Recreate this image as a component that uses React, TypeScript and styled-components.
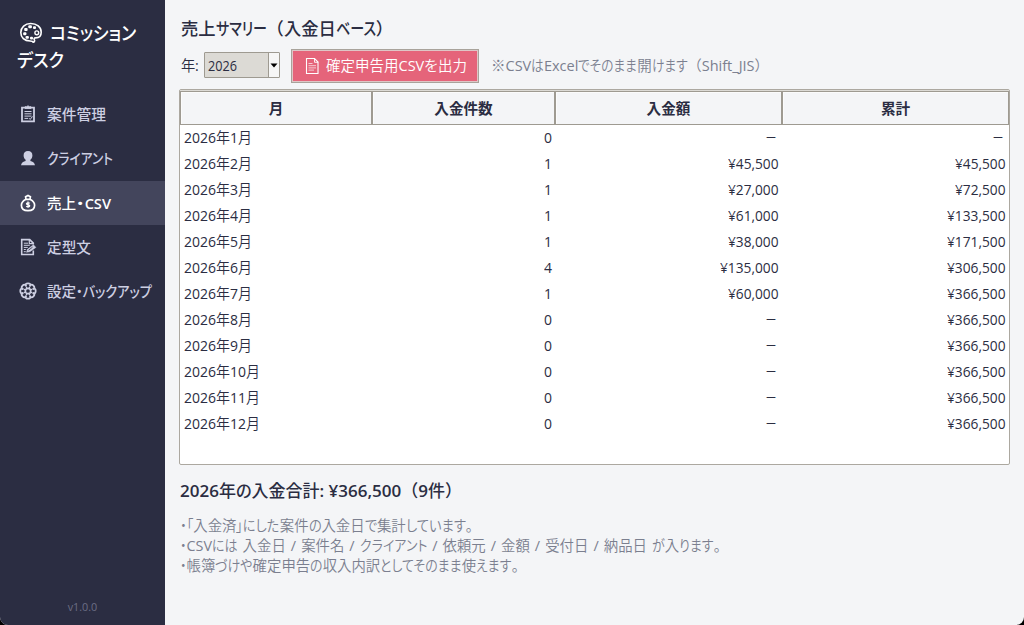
import React, { useLayoutEffect, useRef, useState } from 'react';
import styled, { createGlobalStyle, css } from 'styled-components';

const GlobalStyle = createGlobalStyle`
  * { box-sizing: border-box; }
  html, body { margin: 0; background: #000; overflow: hidden; }
  body {
    font-family: "Open Sans", "Noto Sans CJK JP", sans-serif;
    font-size: 14.5px;
    font-weight: 360;
    color: #2b2d42;
  }
`;

const KANA = /([ぁ-んァ-ヶー・「」]+)/;
const LATIN = /([\u0020-\u00ff]+)/;

const Line = styled.span`
  display: inline-flex;
  align-items: baseline;
  white-space: pre;
`;

const Run = styled.span<{ $kana: boolean; $latinWeight?: number }>`
  display: inline-block;
  flex: none;
  transform-origin: 0 50%;
  ${p => p.$kana && css`font-feature-settings: 'palt';`}
  ${p => p.$latinWeight && css`font-weight: ${p.$latinWeight};`}
`;

function Fit({ w, latin = 400, children }: { w: number; latin?: number; children: string }) {
  const ref = useRef<HTMLSpanElement>(null);
  const [sizes, setSizes] = useState<number[] | null>(null);
  const runs = children
    .split(KANA)
    .flatMap(s => (KANA.test(s) ? [s] : s.split(LATIN)))
    .filter(Boolean);
  const hasKana = runs.some(r => KANA.test(r));

  useLayoutEffect(() => {
    if (ref.current) {
      setSizes(Array.from(ref.current.children).map(c => c.getBoundingClientRect().width));
    }
  }, []);

  const elastic = (r: string) => !hasKana || KANA.test(r);
  let k = 1;
  if (sizes) {
    let fixed = 0;
    let flexible = 0;
    runs.forEach((r, i) => (elastic(r) ? (flexible += sizes[i]) : (fixed += sizes[i])));
    k = (w - fixed) / flexible;
  }

  return (
    <Line ref={ref}>
      {runs.map((r, i) => (
        <Run
          key={i}
          $kana={KANA.test(r)}
          $latinWeight={LATIN.test(r) ? latin : undefined}
          style={
            sizes && elastic(r)
              ? { transform: `scaleX(${k})`, marginRight: sizes[i] * (k - 1) }
              : undefined
          }
        >
          {r}
        </Run>
      ))}
    </Line>
  );
}

/* ------------------------------- layout ------------------------------- */

const Window = styled.div`
  display: flex;
  width: 1024px;
  height: 625px;
  background: #f4f5f7;
  border-radius: 0 0 8px 8px;
  overflow: hidden;
`;

const Sidebar = styled.aside`
  display: flex;
  flex-direction: column;
  width: 165px;
  flex: none;
  background: #2b2d42;
`;

const Brand = styled.h1`
  margin: 0;
  height: 92px;
  padding: 19px 0 0 17px;
  color: #fff;
  font-size: 18.7px;
  font-weight: 500;
  line-height: 27px;
`;

const BrandRow = styled.div`
  display: flex;
  align-items: center;
  height: 27px;
  svg { margin: 1px 7px 0 2px; }
`;

const NavItem = styled.a<{ $active?: boolean }>`
  display: flex;
  align-items: center;
  height: 44.25px;
  padding: 0 0 0 19px;
  gap: 10px;
  font-size: 14.6px;
  font-weight: 500;
  line-height: 20px;
  color: ${p => (p.$active ? '#fff' : '#cdcfe2')};
  background: ${p => (p.$active ? '#43455c' : 'transparent')};
  svg { flex: none; }
`;

const Version = styled.div`
  margin-top: auto;
  height: 27px;
  text-align: center;
  font-size: 10.8px;
  font-weight: 400;
  line-height: 18px;
  color: #6b6d85;
`;

const Main = styled.main`
  display: flex;
  flex-direction: column;
  flex: 1;
  padding: 16px 14px 0 14px;
`;

const Title = styled.h2`
  margin: 0;
  padding-left: 2px;
  font-size: 17.3px;
  font-weight: 500;
  line-height: 26px;
  height: 32px;
`;

const Toolbar = styled.div`
  display: flex;
  align-items: center;
  height: 35px;
  padding-left: 2px;
  line-height: 20px;
`;

const Select = styled.div`
  display: flex;
  width: 76px;
  height: 26px;
  margin: 0 11px 1px 5px;
  border: 1px solid #9e9a91;
  border-radius: 1px;
  background: #dcdad5;
`;

const SelectValue = styled.span`
  flex: 1;
  padding-left: 3px;
  line-height: 25px;
  font-size: 13.6px;
`;

const SelectArrow = styled.span`
  display: flex;
  align-items: center;
  justify-content: center;
  width: 11px;
  background: #f6f6f6;
  border-left: 1px solid #9e9a91;
`;

const ExportButton = styled.button`
  display: flex;
  align-items: center;
  width: 188px;
  height: 34px;
  padding: 0 0 0 12px;
  gap: 5px;
  border: 1px solid #a8a39b;
  box-shadow: inset 0 0 0 1px #dfc6c6;
  background: #e5647a;
  color: #fff;
  font: inherit;
  line-height: 20px;
`;

const Hint = styled.span`
  margin-left: 12px;
  color: #7b7f8f;
`;

const Table = styled.div`
  height: 376px;
  margin-top: 6px;
  border: 1px solid #aca8a0;
  border-radius: 2px;
  background: #fff;
`;

const columns = css`
  display: grid;
  grid-template-columns: 192px 183px 227px 1fr;
`;

const HeadRow = styled.div`
  ${columns}
  height: 35px;
  padding-top: 1px;
  background: #dcdad5;
`;

const HeadCell = styled.div`
  display: flex;
  align-items: center;
  justify-content: center;
  border: 1px solid #9e9a91;
  box-shadow: inset 1px 1px 0 #fbfbfb;
  background: #f4f5f7;
  font-weight: 700;
  font-size: 14.6px;
  line-height: 20px;
`;

const BodyRow = styled.div`
  ${columns}
  height: 26px;
  line-height: 26px;
`;

const Cell = styled.div<{ $num?: boolean }>`
  padding: 0 4px;
  text-align: ${p => (p.$num ? 'right' : 'left')};
  &:nth-child(2) { padding-right: 3px; }
`;

const Dash = styled.span`
  margin-right: 1px;
`;

const Total = styled.div`
  margin-top: 13px;
  padding-left: 1px;
  font-size: 17px;
  font-weight: 500;
  line-height: 26px;
`;

const Notes = styled.div`
  display: flex;
  flex-direction: column;
  margin-top: 12px;
  padding-left: 1px;
  font-size: 14.4px;
  line-height: 20px;
  color: #7b7f8f;
`;

const NoteRow = styled.div<{ $space?: number }>`
  height: 20px;
  word-spacing: ${p => p.$space ?? 0}px;
`;

/* -------------------------------- icons -------------------------------- */

const PaletteIcon = () => (
  <svg width="24" height="22" viewBox="0 0 24 22" fill="none">
    <path d="M14.2 20.2c-.3-1.2-1.4-1.2-3.1-1.2C5.4 19 1.8 15.500 1.800 10.500 1.800 5.500 6 1.500 11.700 1.500c6 0 10.500 3.700 10.500 8.700 0 4.300-2 5.700-5.600 5.700-1.700 0-1.800 1-1.200 2 .5 1 0 2.200-1.200 2.300Z" stroke="#fff" strokeWidth="1.600" />
    <g fill="#fff">
      <rect x="9.300" y="3.300" width="3.600" height="3" rx="1" />
      <rect x="14" y="4.300" width="3" height="2.800" rx="1" />
      <rect x="5.200" y="6" width="3.400" height="3" rx="1" />
      <rect x="4.200" y="10.300" width="3.200" height="3" rx="1" />
      <rect x="6.500" y="14" width="3.400" height="2.800" rx="1" />
      <rect x="11" y="14.800" width="3" height="2.600" rx="1" />
    </g>
    <circle cx="17.800" cy="10.800" r="1.900" stroke="#fff" strokeWidth="1.400" />
  </svg>
);

const ClipboardIcon = () => (
  <svg width="18" height="18" viewBox="0 0 18 18" fill="none" stroke="currentColor">
    <path d="M3 2.700h12v13.600H3z" strokeWidth="1.800" />
    <path d="M6 3.500V1.700h1.700L9 .7l1.300 1H12v1.800z" fill="currentColor" strokeWidth=".8" />
    <path d="M5.500 6.500h7M5.500 8.800h7M5.500 11.100h7M5.500 13.400h3.500M10 13.200l1.200 1.200 2.300-2.900" strokeWidth="1" />
  </svg>
);

const PersonIcon = () => (
  <svg width="18" height="18" viewBox="0 0 18 18" fill="currentColor">
    <path d="M9 2c2.900 0 4.400 1.800 4.400 4.400 0 1.800-.8 3.500-2 4.400v1.100c2.200.8 4.100 1.400 4.600 4.300H2c.5-2.900 2.400-3.500 4.600-4.300v-1.100c-1.200-.9-2-2.600-2-4.400C4.600 3.800 6.100 2 9 2Z" />
  </svg>
);

const MoneyBagIcon = () => (
  <svg width="18" height="18" viewBox="0 0 18 18" fill="none" stroke="currentColor">
    <path d="M6.600 5.400h4.800c2.600 1.400 4.200 3.300 4.200 5.800 0 3.500-2.700 5.500-6.600 5.500s-6.600-2-6.600-5.500c0-2.500 1.600-4.400 4.200-5.800Z" strokeWidth="1.700" />
    <path d="M7 5 6.600 2.800 9 1.400l2.400 1.400L11 5" strokeWidth="1.700" />
    <path d="M10.800 9.300c-.7-.6-3.300-.8-3.300.5 0 1.300 3.200.6 3.200 2 0 1.300-2.600 1.100-3.500.5M9 7.600v6.200" strokeWidth="1.300" />
  </svg>
);

const MemoIcon = () => (
  <svg width="18" height="18" viewBox="0 0 18 18" fill="none" stroke="currentColor">
    <path d="M14.300 12.500v4H2.700V1.600h8l3.600 3.600v1.300" strokeWidth="1.600" />
    <path d="M10.300 1.700v4h4" strokeWidth="1.200" />
    <path d="M4.800 5.200H9M4.800 7.300h6M4.800 9.400h4M4.800 11.500h2M4.800 13.700h2" strokeWidth="1" />
    <path d="m7.500 14.300 1-3.100 6-4.400 2.400 2.600-6 4.300z" fill="currentColor" strokeWidth=".5" />
    <path d="m9.500 12.200 4-3" stroke="#2b2d42" strokeWidth=".8" />
  </svg>
);

const PETALS = Array.from({ length: 8 }, (_, i) => i * 45);

const GearIcon = () => (
  <svg width="18" height="18" viewBox="0 0 18 18" fill="none" stroke="currentColor">
    {PETALS.map(a => (
      <g key={a} transform={`rotate(${a} 9 9)`}>
        <path d="M6.900 4.200C6 2.100 7.300 1.300 9 1.300s3 .8 2.100 2.900" strokeWidth="1.800" />
        <path d="M9 4.200v2.200" strokeWidth="1.200" transform="rotate(22.5 9 9)" />
      </g>
    ))}
    <circle cx="9" cy="9" r="2.700" strokeWidth="1.700" />
  </svg>
);

const PageIcon = () => (
  <svg width="17" height="18" viewBox="0 0 17 18" fill="none" stroke="#fff" strokeWidth="1.100">
    <path d="M2.500 1.500h8l3.500 3.500v11.500H2.500z" />
    <path d="M10.500 1.500v3.800h3.700" strokeWidth=".9" />
    <path d="M4.500 6.500h4M4.500 8.700h7.500M4.500 10.900h7.500M4.500 13.100h5.500" strokeWidth=".8" opacity=".85" />
  </svg>
);

/* --------------------------------- data --------------------------------- */

const nav = [
  { label: '案件管理', w: 59, Icon: ClipboardIcon },
  { label: 'クライアント', w: 66, Icon: PersonIcon },
  { label: '売上・CSV', w: 64, Icon: MoneyBagIcon, active: true },
  { label: '定型文', w: 44, Icon: MemoIcon },
  { label: '設定・バックアップ', w: 105, Icon: GearIcon },
];

const rows: [string, string, string, string][] = [
  ['1', '0', '－', '－'],
  ['2', '1', '¥45,500', '¥45,500'],
  ['3', '1', '¥27,000', '¥72,500'],
  ['4', '1', '¥61,000', '¥133,500'],
  ['5', '1', '¥38,000', '¥171,500'],
  ['6', '4', '¥135,000', '¥306,500'],
  ['7', '1', '¥60,000', '¥366,500'],
  ['8', '0', '－', '¥366,500'],
  ['9', '0', '－', '¥366,500'],
  ['10', '0', '－', '¥366,500'],
  ['11', '0', '－', '¥366,500'],
  ['12', '0', '－', '¥366,500'],
];

const Amount = ({ value }: { value: string }) =>
  value === '－' ? (
    <Dash><Fit w={12}>－</Fit></Dash>
  ) : (
    <Fit w={value.length === 8 ? 58.5 : 50.5}>{value}</Fit>
  );

export default function App() {
  return (
    <>
      <GlobalStyle />
      <Window>
        <Sidebar>
          <Brand>
            <BrandRow><PaletteIcon /><Fit w={86}>コミッション</Fit></BrandRow>
            <BrandRow><Fit w={47}>デスク</Fit></BrandRow>
          </Brand>
          {nav.map(({ label, w, Icon, active }) => (
            <NavItem key={label} $active={active}><Icon /><Fit w={w} latin={600}>{label}</Fit></NavItem>
          ))}
          <Version>v1.0.0</Version>
        </Sidebar>
        <Main>
          <Title><Fit w={212}>売上サマリー（入金日ベース）</Fit></Title>
          <Toolbar>
            <Fit w={18}>年:</Fit>
            <Select>
              <SelectValue><Fit w={29}>2026</Fit></SelectValue>
              <SelectArrow>
                <svg width="8" height="5" viewBox="0 0 8 5"><path d="M.5.5h7L4 4.500z" fill="#000" /></svg>
              </SelectArrow>
            </Select>
            <ExportButton><PageIcon /><Fit w={141}>確定申告用CSVを出力</Fit></ExportButton>
            <Hint><Fit w={278}>※CSVはExcelでそのまま開けます（Shift_JIS）</Fit></Hint>
          </Toolbar>
          <Table>
            <HeadRow>
              <HeadCell>月</HeadCell>
              <HeadCell>入金件数</HeadCell>
              <HeadCell>入金額</HeadCell>
              <HeadCell>累計</HeadCell>
            </HeadRow>
            {rows.map(([month, count, amount, sum]) => (
              <BodyRow key={month}>
                <Cell><Fit w={month.length === 2 ? 76 : 68}>{`2026年${month}月`}</Fit></Cell>
                <Cell $num><Fit w={8}>{count}</Fit></Cell>
                <Cell $num><Amount value={amount} /></Cell>
                <Cell $num><Amount value={sum} /></Cell>
              </BodyRow>
            ))}
          </Table>
          <Total><Fit w={282} latin={600}>2026年の入金合計: ¥366,500（9件）</Fit></Total>
          <Notes>
            <NoteRow><Fit w={300}>・「入金済」にした案件の入金日で集計しています。</Fit></NoteRow>
            <NoteRow $space={1.3}><Fit w={548}>・CSVには 入金日 / 案件名 / クライアント / 依頼元 / 金額 / 受付日 / 納品日 が入ります。</Fit></NoteRow>
            <NoteRow><Fit w={346}>・帳簿づけや確定申告の収入内訳としてそのまま使えます。</Fit></NoteRow>
          </Notes>
        </Main>
      </Window>
    </>
  );
}
